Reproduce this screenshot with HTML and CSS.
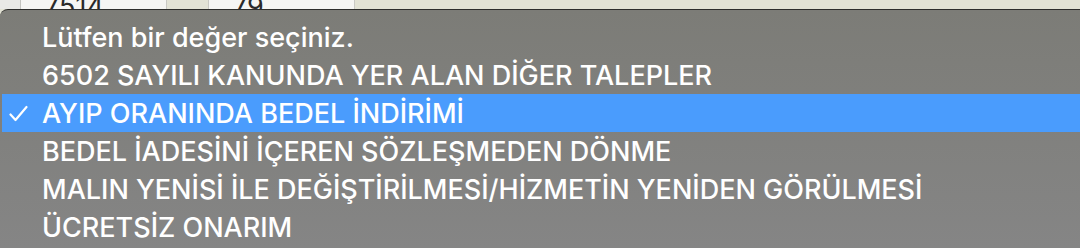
FILE: index.html
```html
<!DOCTYPE html>
<html lang="tr">
<head>
<meta charset="utf-8">
<link rel="stylesheet" href="styles.css">
</head>
<body>
<div class="table-strip">
  <div class="cell c-gray"></div>
  <div class="cell c-white c1"><span class="num">7514</span></div>
  <div class="cell c-beige c2"></div>
  <div class="cell c-white c3"><span class="num">79</span></div>
  <div class="cell c-beige c4"></div>
</div>
<div class="menu">
  <div class="item"><span class="check"></span><span class="label">Lütfen bir değer seçiniz.</span></div>
  <div class="item"><span class="check"></span><span class="label">6502 SAYILI KANUNDA YER ALAN DİĞER TALEPLER</span></div>
  <div class="item selected"><span class="check"><svg class="check-icon" width="20" height="18" viewBox="0 0 20 18"><polyline points="1.5,9.5 6.5,15 17.5,2" fill="none" stroke="#ffffff" stroke-width="2.2" stroke-linecap="round" stroke-linejoin="round"/></svg></span><span class="label">AYIP ORANINDA BEDEL İNDİRİMİ</span></div>
  <div class="item"><span class="check"></span><span class="label">BEDEL İADESİNİ İÇEREN SÖZLEŞMEDEN DÖNME</span></div>
  <div class="item"><span class="check"></span><span class="label">MALIN YENİSİ İLE DEĞİŞTİRİLMESİ/HİZMETİN YENİDEN GÖRÜLMESİ</span></div>
  <div class="item"><span class="check"></span><span class="label">ÜCRETSİZ ONARIM</span></div>
</div>
</body>
</html>
```
FILE: styles.css
```css
html, body {
  margin: 0;
  padding: 0;
  width: 1080px;
  height: 248px;
  overflow: hidden;
  background: #e2e2d4;
  font-family: Inter, "Noto Sans", "DejaVu Sans", sans-serif;
}
.table-strip {
  display: flex;
  height: 9px;
  overflow: hidden;
}
.cell {
  height: 9px;
  box-sizing: border-box;
  overflow: hidden;
  display: flex;
  align-items: flex-end;
}
.c-gray { width: 21px; background: #e9e9e6; border-right: 1px solid #c4c4c0; }
.c-white { background: #f5f5f3; border-right: 1px solid #c9c9c4; }
.c1 { width: 146px; padding-left: 23px; }
.c2 { width: 42px; background: #e3e3d6; border-right: 1px solid #c9c9c4; }
.c3 { width: 146px; padding-left: 23px; }
.c4 { flex: 1; background: #e2e2d4; }
.num {
  font-size: 27px;
  line-height: 10px;
  color: #2a2a2a;
  transform: translateY(3px);
}
.menu {
  border-top: 1px solid #2e2e2c;
  border-top-left-radius: 8px;
  background: linear-gradient(#7c7c77, #858585);
  padding-top: 8px;
  padding-left: 2px;
  height: 239px;
  box-sizing: border-box;
}
.item {
  display: flex;
  align-items: center;
  height: 38px;
  color: #ffffff;
  font-size: 27px;
  font-weight: 500;
  white-space: nowrap;
}
.item.selected {
  background: #4a9cfd;
}
.check {
  width: 40px;
  padding-left: 7px;
  box-sizing: border-box;
  display: flex;
  align-items: center;
}
.check-icon {
  display: block;
  margin-top: 1px;
}
```
